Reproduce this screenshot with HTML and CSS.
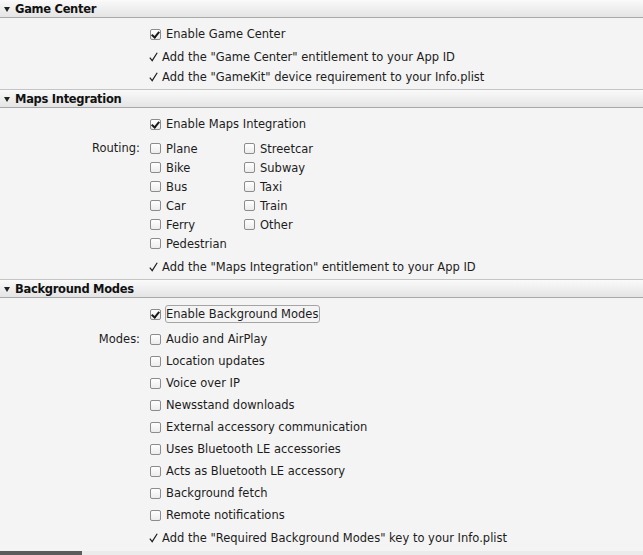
FILE: index.html
```html
<!DOCTYPE html>
<html>
<head>
<meta charset="utf-8">
<link rel="stylesheet" href="styles.css">
</head>
<body>
<div class="page">
  <section class="sec">
    <div class="hdr"><span class="tri"></span>Game Center</div>
    <div class="body b1">
      <div class="row r20"><div class="lbl"></div><div class="ctl"><span class="cb on"></span><span>Enable Game Center</span></div></div>
      <div class="checks">
        <div class="row r20"><div class="lbl"></div><div class="ctl chk"><svg class="tick" viewBox="0 0 9 10" width="9" height="10"><path d="M0.8 5.6 L3.2 8.6 L8.2 0.8" fill="none" stroke="#1c1c1c" stroke-width="1.2"/></svg>Add the "Game Center" entitlement to your App ID</div></div>
        <div class="row r20"><div class="lbl"></div><div class="ctl chk"><svg class="tick" viewBox="0 0 9 10" width="9" height="10"><path d="M0.8 5.6 L3.2 8.6 L8.2 0.8" fill="none" stroke="#1c1c1c" stroke-width="1.2"/></svg>Add the "GameKit" device requirement to your Info.plist</div></div>
      </div>
    </div>
  </section>
  <section class="sec">
    <div class="hdr"><span class="tri"></span>Maps Integration</div>
    <div class="body b2">
      <div class="row r20"><div class="lbl"></div><div class="ctl"><span class="cb on"></span><span>Enable Maps Integration</span></div></div>
      <div class="row routing"><div class="lbl">Routing:</div>
        <div class="grid2">
          <div class="ctl r19"><span class="cb"></span>Plane</div>
          <div class="ctl r19"><span class="cb"></span>Streetcar</div>
          <div class="ctl r19"><span class="cb"></span>Bike</div>
          <div class="ctl r19"><span class="cb"></span>Subway</div>
          <div class="ctl r19"><span class="cb"></span>Bus</div>
          <div class="ctl r19"><span class="cb"></span>Taxi</div>
          <div class="ctl r19"><span class="cb"></span>Car</div>
          <div class="ctl r19"><span class="cb"></span>Train</div>
          <div class="ctl r19"><span class="cb"></span>Ferry</div>
          <div class="ctl r19"><span class="cb"></span>Other</div>
          <div class="ctl r19"><span class="cb"></span>Pedestrian</div>
        </div>
      </div>
      <div class="row r20 mt4"><div class="lbl"></div><div class="ctl chk"><svg class="tick" viewBox="0 0 9 10" width="9" height="10"><path d="M0.8 5.6 L3.2 8.6 L8.2 0.8" fill="none" stroke="#1c1c1c" stroke-width="1.2"/></svg>Add the "Maps Integration" entitlement to your App ID</div></div>
    </div>
  </section>
  <section class="sec">
    <div class="hdr"><span class="tri"></span>Background Modes</div>
    <div class="body b3">
      <div class="row r20"><div class="lbl"></div><div class="ctl"><span class="cb on"></span><span class="focus">Enable Background Modes</span></div></div>
      <div class="row modes"><div class="lbl">Modes:</div>
        <div class="list">
          <div class="ctl r22"><span class="cb"></span>Audio and AirPlay</div>
          <div class="ctl r22"><span class="cb"></span>Location updates</div>
          <div class="ctl r22"><span class="cb"></span>Voice over IP</div>
          <div class="ctl r22"><span class="cb"></span>Newsstand downloads</div>
          <div class="ctl r22"><span class="cb"></span>External accessory communication</div>
          <div class="ctl r22"><span class="cb"></span>Uses Bluetooth LE accessories</div>
          <div class="ctl r22"><span class="cb"></span>Acts as Bluetooth LE accessory</div>
          <div class="ctl r22"><span class="cb"></span>Background fetch</div>
          <div class="ctl r22"><span class="cb"></span>Remote notifications</div>
        </div>
      </div>
      <div class="row r20 mt2"><div class="lbl"></div><div class="ctl chk"><svg class="tick" viewBox="0 0 9 10" width="9" height="10"><path d="M0.8 5.6 L3.2 8.6 L8.2 0.8" fill="none" stroke="#1c1c1c" stroke-width="1.2"/></svg>Add the "Required Background Modes" key to your Info.plist</div></div>
    </div>
  </section>
  <div class="footer"><div class="seg"></div></div>
</div>
</body>
</html>
```
FILE: styles.css
```css
html, body {
  margin: 0;
  padding: 0;
  background: #f4f4f4;
}
body {
  font-family: "DejaVu Sans", "Liberation Sans", sans-serif;
  font-size: 11.5px;
  color: #1c1c1c;
  width: 643px;
  height: 555px;
  overflow: hidden;
}
.page {
  display: flex;
  flex-direction: column;
}
.hdr {
  height: 17px;
  border-bottom: 1px solid #a8a8a8;
  background: linear-gradient(#fafafa, #e4e4e4);
  display: flex;
  align-items: center;
  font-weight: bold;
  font-size: 11.5px;
  letter-spacing: -0.3px;
  color: #111;
  box-sizing: content-box;
}
.tri {
  width: 0;
  height: 0;
  border-left: 3px solid transparent;
  border-right: 3px solid transparent;
  border-top: 5px solid #222;
  margin: 1px 5px 0 4px;
}
.body {
  display: flex;
  flex-direction: column;
  border-bottom: 1px solid #c4c4c4;
}
.b1 { padding: 6px 0 2px; }
.b1 .checks { margin-top: 3px; }
.b2 { padding: 6px 0 2px; }
.b3 { padding: 6px 0 3px; border-bottom: none; }
.row {
  display: flex;
  align-items: stretch;
}
.lbl {
  width: 140px;
  flex: none;
  text-align: right;
  margin-right: 10px;
}
.r20 { height: 20px; }
.r19 { height: 19px; }
.r22 { height: 22px; }
.mt4 { margin-top: 4px; }
.mt2 { margin-top: 2px; }
.ctl {
  display: flex;
  align-items: center;
  white-space: nowrap;
}
.routing { margin-top: 5px; }
.routing .lbl {
  line-height: 19px;
}
.modes { margin-top: 4px; }
.modes .lbl { line-height: 22px; }
.grid2 {
  display: grid;
  grid-template-columns: 94px auto;
}
.list {
  display: flex;
  flex-direction: column;
}
.cb {
  width: 9px;
  height: 9px;
  border: 1px solid #8c8c8c;
  border-radius: 2px;
  background: linear-gradient(#ffffff, #ececec);
  margin-right: 5px;
  position: relative;
  flex: none;
}
.cb.on::after {
  content: "";
  position: absolute;
  left: 2px;
  top: 0px;
  width: 3px;
  height: 6px;
  border-right: 2px solid #1a1a1a;
  border-bottom: 2px solid #1a1a1a;
  transform: rotate(40deg);
}
.chk { margin-left: -1px; }
.tick {
  margin-right: 4px;
  flex: none;
}
.focus {
  border: 1px solid #a4a4a4;
  border-radius: 3px;
  padding: 1px 1px 1px 0;
  margin-left: -1px;
}
.footer {
  height: 4px;
  background: #ebebeb;
  display: flex;
}
.seg {
  width: 82px;
  background: #5c5c5c;
}
```
